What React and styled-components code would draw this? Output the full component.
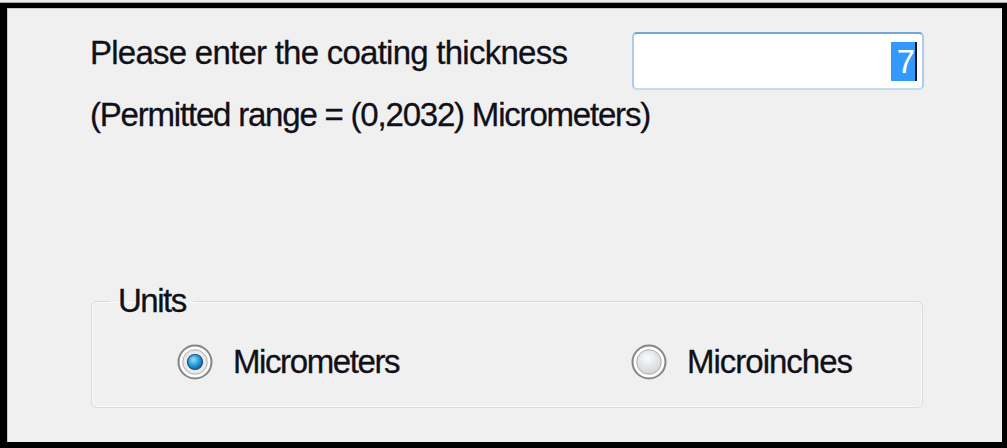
import React from "react"
import styled, { createGlobalStyle } from "styled-components"

const GlobalStyle = createGlobalStyle`
  html, body {
    margin: 0;
    padding: 0;
    background: #ededed;
  }

  body {
    font-family: "Liberation Sans", Arial, sans-serif;
    color: #000;
  }
`

const Screen = styled.div`
  width: 1007px;
  height: 448px;
  display: flex;
  flex-direction: column;
  background: #ededed;
`

const TopEdge = styled.div`
  height: 3px;
  box-sizing: border-box;
  border-bottom: 1px solid #a9a9a9;
`

const Window = styled.div`
  flex: 1;
  box-sizing: border-box;
  border-style: solid;
  border-color: #000;
  border-width: 5px 5px 6px 7px;
  background: #f0f0f0;
  box-shadow: inset 1px 1px 0 #c9c9c9;
  padding: 24px 0 0 83px;
`

const Text = styled.div`
  font-size: 33px;
  line-height: 38px;
  letter-spacing: ${(p) => p.$spacing || "-1px"};
  white-space: nowrap;
  color: #101018;
  -webkit-text-stroke: 0.3px #101018;
`

const PromptRow = styled.div`
  display: grid;
  grid-template-columns: 542px 292px;
  align-items: start;
`

const Prompt = styled(Text)`
  margin-top: 2px;
`

const RangeNote = styled(Text)`
  margin-top: 6px;
`

const TextBox = styled.div`
  height: 58px;
  box-sizing: border-box;
  display: flex;
  align-items: center;
  justify-content: flex-end;
  padding-right: 5px;
  background: #fff;
  border: 2px solid;
  border-color: #74a6d8 #b0cce8 #c6daee #b0cce8;
  border-radius: 5px;
  box-shadow: 0 0 1px #d3e3f3;
`

const SelectedValue = styled.span`
  font-size: 33px;
  line-height: 39px;
  padding-left: 6px;
  background: #3399ff;
  color: #fff;
  border-right: 2px solid #161616;
`

const UnitsGroup = styled.fieldset`
  margin: 148px 0 0 1px;
  padding: 0;
  width: 832px;
  box-sizing: border-box;
  border: 1px solid #d0dbe2;
  border-radius: 6px;
  box-shadow: inset 0 0 0 1px #fbfbfb;
  min-inline-size: 0;
`

const Legend = styled(Text).attrs({ as: "legend" })`
  margin-left: 18px;
  padding: 0 7px 0 8px;
  letter-spacing: -1.5px;
`

const RadioRow = styled.div`
  display: grid;
  grid-template-columns: 454px auto;
  padding: 23px 0 26px 85px;
`

const RadioOption = styled.label`
  display: flex;
  align-items: center;
  gap: 20px;
`

const RadioMark = ({ checked }) => (
  <svg width="36" height="36" viewBox="0 0 36 36">
    <defs>
      <radialGradient id="radioFace" cx="45%" cy="35%" r="70%">
        <stop offset="0%" stopColor="#fbfbfb" />
        <stop offset="100%" stopColor="#cfd2d6" />
      </radialGradient>
      <radialGradient id="radioDot" cx="40%" cy="35%" r="70%">
        <stop offset="0%" stopColor="#8fe1ff" />
        <stop offset="55%" stopColor="#2a9ad8" />
        <stop offset="100%" stopColor="#0d5a95" />
      </radialGradient>
    </defs>
    <circle cx="18" cy="18" r="16.5" fill="#f4f4f4" stroke="#868686" strokeWidth="2" />
    <circle cx="18" cy="18" r="14.2" fill="none" stroke="#ffffff" strokeWidth="1.6" />
    <circle cx="18" cy="18" r="12.2" fill={checked ? "#e9e9e9" : "url(#radioFace)"} stroke="#b0b0b0" strokeWidth="1" />
    {checked && (
      <circle cx="18" cy="18" r="7.5" fill="url(#radioDot)" stroke="#1b4f7a" strokeWidth="1.2" />
    )}
  </svg>
)

export default function App() {
  return (
    <>
      <GlobalStyle />
      <Screen>
        <TopEdge />
        <Window>
          <PromptRow>
            <Prompt $spacing="-0.75px">Please enter the coating thickness</Prompt>
            <TextBox>
              <SelectedValue>7</SelectedValue>
            </TextBox>
          </PromptRow>
          <RangeNote $spacing="-1.2px">(Permitted range = (0,2032) Micrometers)</RangeNote>

          <UnitsGroup>
            <Legend>Units</Legend>
            <RadioRow>
              <RadioOption>
                <RadioMark checked />
                <Text $spacing="-1.4px">Micrometers</Text>
              </RadioOption>
              <RadioOption>
                <RadioMark />
                <Text>Microinches</Text>
              </RadioOption>
            </RadioRow>
          </UnitsGroup>
        </Window>
      </Screen>
    </>
  )
}
